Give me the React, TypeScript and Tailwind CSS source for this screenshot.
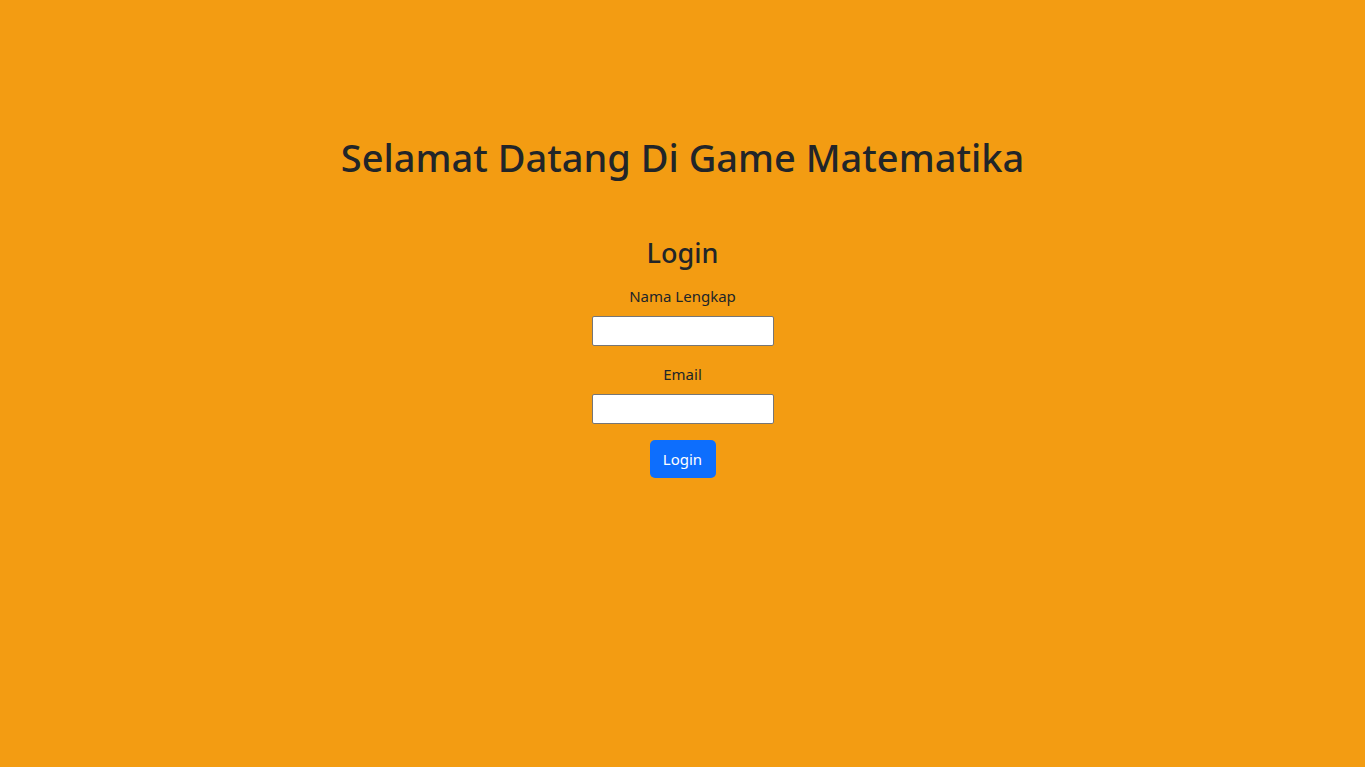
import React from 'react';

const App = () => {
  return (
    <div className="min-h-screen w-full bg-[#f39c12] text-[#212529] font-['Noto_Sans',_'Open_Sans',_sans-serif] text-center">
      <div className="pt-[133px]">
        <h1 className="text-[38px] leading-[48px] font-medium">Selamat Datang Di Game Matematika</h1>
      </div>

      <form className="mt-[53px] flex flex-col items-center" onSubmit={(e) => e.preventDefault()}>
        <h2 className="text-[27px] leading-[38px] font-medium mb-2">Login</h2>

        <label htmlFor="nama" className="text-[15px] leading-6 mt-[4px] mb-2">Nama Lengkap</label>
        <input id="nama" type="text" className="w-[182px] h-[30px] bg-white border border-[#767676] rounded-[2px]" />

        <label htmlFor="email" className="text-[15px] leading-6 mt-4 mb-2">Email</label>
        <input id="email" type="email" className="w-[182px] h-[30px] bg-white border border-[#767676] rounded-[2px]" />

        <button type="submit" className="mt-4 h-[38px] w-[66px] rounded-[5px] bg-[#0d6efd] text-white text-[15px] leading-6">
          Login
        </button>
      </form>
    </div>
  );
};

export default App;
